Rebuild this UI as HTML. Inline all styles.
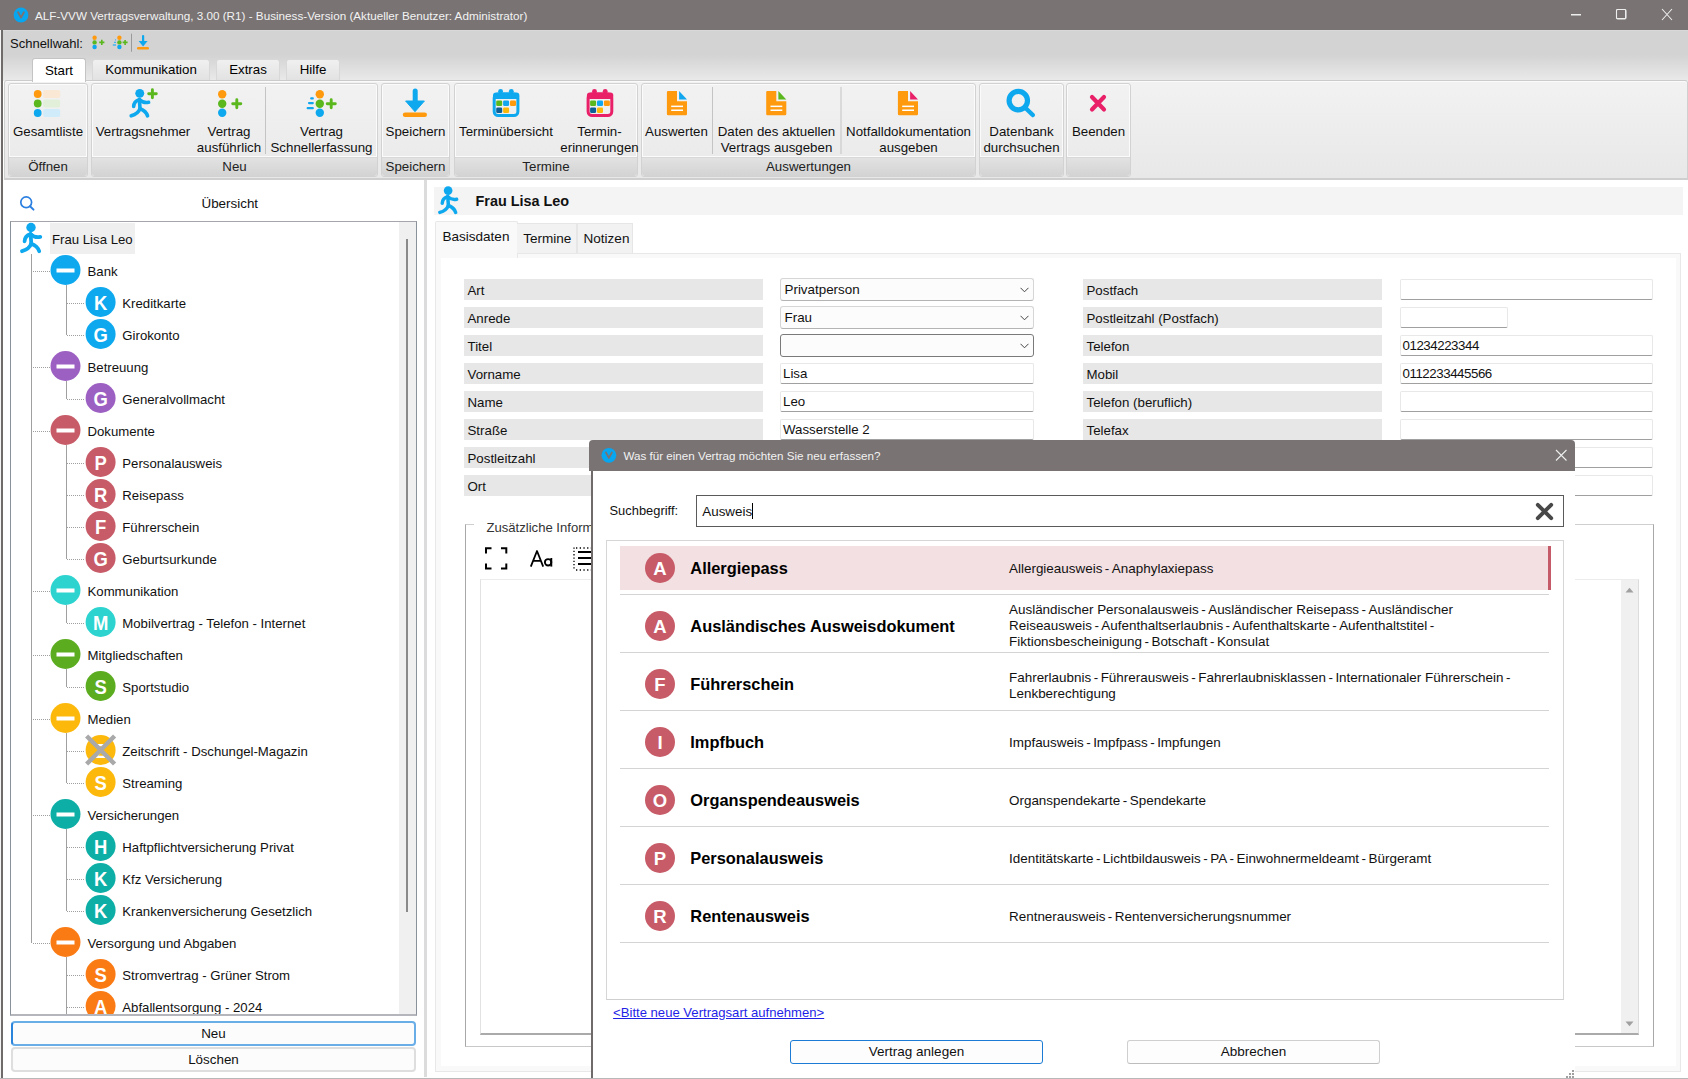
<!DOCTYPE html>
<html><head><meta charset="utf-8">
<style>
*{margin:0;padding:0;box-sizing:border-box}
html,body{width:1688px;height:1079px;overflow:hidden;background:#fff;font-family:"Liberation Sans",sans-serif;color:#000}
.a{position:absolute}
.t{position:absolute;white-space:nowrap;line-height:1}
#title{left:0;top:0;width:1688px;height:30px;background:#797373}
#qat{left:3px;top:30px;width:1685px;height:51px;background:linear-gradient(#d3d3d3 0,#d3d3d3 24px,#ebebeb 51px);border-top:1px solid #d9d9d9}
.tab{position:absolute;top:59px;height:21px;border:1px solid #d8d8d8;border-bottom:none;border-radius:3px 3px 0 0;background:linear-gradient(#f0f0f0,#e2e2e2);font-size:13.3px;text-align:center;line-height:20px}
#ribbon{left:4px;top:79.5px;width:1684px;height:100.5px;background:linear-gradient(#f2f2f2,#e8e8e8);border-top:1px solid #cbcbcb;border-left:1px solid #d0d0d0;border-right:1px solid #d0d0d0;border-bottom:2px solid #cfcfcf;border-radius:3px 3px 0 0;box-shadow:inset 0 1px #fbfbfb}
.grp{position:absolute;top:83px;height:94px;border:1px solid #d2d2d2;border-radius:3px;background:linear-gradient(#f2f2f2,#e9e9e9);box-shadow:inset 0 0 0 1px #fbfbfb}
.grp .lbl{position:absolute;left:0;right:0;bottom:0;height:19px;background:linear-gradient(#e2e2e2,#d3d3d3);border-top:1px solid #d8d8d8;box-shadow:0 -1px #fbfbfb;border-radius:0 0 3px 3px;font-size:13.3px;text-align:center;line-height:17px;color:#222}
.rb{position:absolute;font-size:13.3px;text-align:center;line-height:16px;color:#111}
.sep{position:absolute;width:1px;background:#c8c8c8}
.tt{position:absolute;white-space:nowrap;font-size:13.2px;line-height:19px;color:#111}
.lb{position:absolute;width:299px;height:21.5px;background:#e7e7e7;font-size:13.3px;line-height:23px;padding-left:3.5px;color:#111;white-space:nowrap}
.cb{position:absolute;width:253.5px;height:23.5px;background:#fcfcfc;border:1px solid #d6d6d6;border-bottom-color:#b4b4b4;border-radius:3px;font-size:13.4px;line-height:22px;padding-left:3.5px;color:#111}
.cb.foc{border-color:#7a7a7a}
.in{position:absolute;width:253.5px;height:21.5px;background:#fff;border:1px solid #e8e8e8;border-bottom:1.5px solid #a0a0a0;border-radius:2px;font-size:13.3px;line-height:20px;padding-left:2px;color:#111;white-space:nowrap}
.dd{position:absolute;white-space:nowrap;font-size:13.45px;line-height:16px;color:#111}
</style></head><body>
<div id="title" class="a">
  <div class="a" style="left:14px;top:8px;width:14px;height:14px;border-radius:50%;background:#12a4ee"></div>
  <div class="t" style="left:35px;top:9.8px;font-size:11.7px;color:#f2f2f2">ALF-VVW Vertragsverwaltung, 3.00 (R1) - Business-Version (Aktueller Benutzer: Administrator)</div>
  <div class="a" style="left:1571px;top:14px;width:10px;height:1px;background:#eee"></div>
  <div class="a" style="left:1616px;top:9px;width:10px;height:10px;border:1px solid #eee;border-radius:1px"></div>
</div>
<div id="qat" class="a"></div>
<div class="t" style="left:10px;top:37px;font-size:13px;color:#111">Schnellwahl:</div>
<div class="tab" style="left:32px;width:54px;height:24px;background:#fff;top:58px;line-height:23px;border-color:#c4c4c4;z-index:2">Start</div>
<div class="tab" style="left:92px;width:118px">Kommunikation</div>
<div class="tab" style="left:216px;width:64px">Extras</div>
<div class="tab" style="left:286px;width:54px">Hilfe</div>
<div id="ribbon" class="a"></div>
<div class="grp" style="left:8px;width:80px"><div class="lbl">Öffnen</div></div>
<div class="grp" style="left:91px;width:287px"><div class="lbl">Neu</div></div>
<div class="grp" style="left:381px;width:69px"><div class="lbl">Speichern</div></div>
<div class="grp" style="left:454px;width:184px"><div class="lbl">Termine</div></div>
<div class="grp" style="left:641px;width:335px"><div class="lbl">Auswertungen</div></div>
<div class="grp" style="left:979px;width:85px"><div class="lbl"></div></div>
<div class="grp" style="left:1066px;width:65px"><div class="lbl"></div></div>

<div class="rb" style="left:8px;width:80px;top:124px">Gesamtliste</div>
<div class="rb" style="left:91px;width:104px;top:124px">Vertragsnehmer</div>
<div class="rb" style="left:194px;width:70px;top:124px">Vertrag<br>ausführlich</div>
<div class="rb" style="left:266px;width:111px;top:124px">Vertrag<br>Schnellerfassung</div>
<div class="rb" style="left:381px;width:69px;top:124px">Speichern</div>
<div class="rb" style="left:454px;width:104px;top:124px">Terminübersicht</div>
<div class="rb" style="left:559.5px;width:80px;top:124px">Termin-<br>erinnerungen</div>
<div class="rb" style="left:641px;width:71px;top:124px">Auswerten</div>
<div class="rb" style="left:713px;width:127px;top:124px">Daten des aktuellen<br>Vertrags ausgeben</div>
<div class="rb" style="left:841px;width:135px;top:124px">Notfalldokumentation<br>ausgeben</div>
<div class="rb" style="left:979px;width:85px;top:124px">Datenbank<br>durchsuchen</div>
<div class="rb" style="left:1066px;width:65px;top:124px">Beenden</div>

<svg class="a" style="left:0;top:0" width="1688" height="180" viewBox="0 0 1688 180">
<defs>
 <g id="run">
  <circle cx="11" cy="5" r="4.7" fill="#0ea8ef"/>
  <g fill="none" stroke="#0ea8ef" stroke-width="3.8" stroke-linecap="round" stroke-linejoin="round">
   <path d="M4.6 18.8 Q4.8 13.3 10.6 11.6"/>
   <path d="M10.6 11.6 Q14.8 15.6 20.3 14.4"/>
   <path d="M10.6 11.6 L11.3 21.2"/>
   <path d="M11.3 21.2 Q9.2 26.8 2 28.7"/>
   <path d="M11.3 21.2 Q17.6 23.6 19.2 28.7"/>
  </g>
 </g>
</defs>
<!-- title icon -->
<circle cx="21" cy="15" r="7.4" fill="#07a6f0"/>
<path d="M18.1 12.3 L21 17.6 L23.9 12.3" fill="none" stroke="#797373" stroke-width="1.9" stroke-linecap="round" stroke-linejoin="round"/>
<!-- window controls -->
<rect x="1571" y="14.2" width="10" height="1.3" fill="#eee"/>
<rect x="1616.5" y="9.5" width="9.5" height="9.5" rx="1.2" fill="none" stroke="#eee" stroke-width="1.1"/>
<path d="M1662 9 L1672 20 M1672 9 L1662 20" stroke="#eee" stroke-width="1.1"/>
<!-- QAT icons -->
<circle cx="94.6" cy="37.7" r="2.2" fill="#ff9a0e"/><circle cx="94.6" cy="42.4" r="2.2" fill="#5ab71e"/><circle cx="94.6" cy="47" r="2.2" fill="#0ea8ef"/>
<path d="M99.2 42.4 H104.4 M101.8 39.8 V45" stroke="#5ab71e" stroke-width="1.6"/>
<circle cx="119.4" cy="37.7" r="2.2" fill="#ff9a0e"/><circle cx="119.4" cy="42.4" r="2.2" fill="#5ab71e"/><circle cx="119.4" cy="47" r="2.2" fill="#0ea8ef"/>
<path d="M122.6 42.4 H127.6 M125.1 39.9 V44.9" stroke="#5ab71e" stroke-width="1.6"/>
<path d="M115 39.8 H116 M114 42.4 H116 M112.8 45 H116" stroke="#43b6f0" stroke-width="1.3"/>
<rect x="131" y="33.7" width="1" height="18" fill="#9a9a9a"/>
<path d="M143.1 36 V43" stroke="#0ea8ef" stroke-width="2.2" stroke-linecap="round"/>
<path d="M138.6 41 H147.6 L143.1 46.6 Z" fill="#0ea8ef"/>
<rect x="137" y="47" width="12" height="2.5" rx="1.2" fill="#ff9a0e"/>
<!-- Gesamtliste -->
<rect x="43.2" y="90" width="17" height="8" rx="2" fill="#fae8d5"/>
<rect x="43.2" y="99.5" width="17" height="8" rx="2" fill="#e2f0d9"/>
<rect x="43.2" y="109" width="17" height="8" rx="2" fill="#d0ebfa"/>
<circle cx="37.7" cy="94" r="3.9" fill="#ff9a0e"/><circle cx="37.7" cy="103.5" r="3.9" fill="#5ab71e"/><circle cx="37.7" cy="113" r="3.9" fill="#0ea8ef"/>
<!-- Vertragsnehmer -->
<use href="#run" transform="translate(129.3 88.6) scale(0.95)"/>
<path d="M148.7 93.8 H156.3 M152.4 89.8 V97.7" stroke="#5ab71e" stroke-width="2.9" stroke-linecap="round"/>
<!-- Vertrag ausfuehrlich -->
<circle cx="222.2" cy="94.2" r="4.2" fill="#ff9a0e"/><circle cx="222.2" cy="103.7" r="4.2" fill="#5ab71e"/><circle cx="222.2" cy="112.8" r="4.2" fill="#0ea8ef"/>
<path d="M232.7 103.7 H240.8 M236.8 99.7 V107.8" stroke="#5ab71e" stroke-width="2.9" stroke-linecap="round"/>
<!-- Schnellerfassung -->
<circle cx="319.8" cy="94.2" r="4.2" fill="#ff9a0e"/><circle cx="319.8" cy="103.7" r="4.2" fill="#5ab71e"/><circle cx="319.8" cy="112.8" r="4.2" fill="#0ea8ef"/>
<path d="M327.2 103.7 H335.3 M331.2 99.7 V107.8" stroke="#5ab71e" stroke-width="2.9" stroke-linecap="round"/>
<path d="M311.2 98.4 H312.8 M309 103.1 H312.8 M307.7 108.2 H312.8" stroke="#11a6ee" stroke-width="2.2" stroke-linecap="round"/>
<!-- Speichern -->
<path d="M415.2 91 V104" stroke="#0ea8ef" stroke-width="5" stroke-linecap="round"/>
<path d="M405.6 101 H424.4 L415 111.7 Z" fill="#0ea8ef" stroke="#0ea8ef" stroke-width="1" stroke-linejoin="round"/>
<rect x="402.8" y="112.4" width="24.2" height="4.6" rx="2.3" fill="#ff9a0e"/>
<!-- calendars -->
<g id="cal">
<rect x="494.2" y="94" width="23.7" height="21.5" rx="4" fill="none" stroke="#0ea8ef" stroke-width="3"/>
<rect x="493" y="92.5" width="26.4" height="6.5" rx="3" fill="#0ea8ef"/>
<circle cx="500.6" cy="91.3" r="2.4" fill="#0ea8ef"/><circle cx="511.3" cy="91.3" r="2.4" fill="#0ea8ef"/>
<rect x="496.2" y="100.4" width="6" height="5.6" rx="1.3" fill="#5ab71e"/>
<rect x="503.1" y="100.4" width="6" height="5.6" rx="1.3" fill="#11a6ee"/>
<rect x="510" y="100.4" width="6" height="5.6" rx="1.3" fill="#ff9a0e"/>
<rect x="496.2" y="107.4" width="6" height="5.6" rx="1.3" fill="#0d5f96"/>
<rect x="503.1" y="107.4" width="6" height="5.6" rx="1.3" fill="#fbb80a"/>
</g>
<rect x="588.1" y="94" width="23.7" height="21.5" rx="4" fill="none" stroke="#e91f68" stroke-width="3"/>
<rect x="586.9" y="92.5" width="26.4" height="6.5" rx="3" fill="#e91f68"/>
<circle cx="594.5" cy="91.3" r="2.4" fill="#e91f68"/><circle cx="605.2" cy="91.3" r="2.4" fill="#e91f68"/>
<rect x="590.1" y="100.4" width="6" height="5.6" rx="1.3" fill="#5ab71e"/>
<rect x="597" y="100.4" width="6" height="5.6" rx="1.3" fill="#11a6ee"/>
<rect x="603.9" y="100.4" width="6" height="5.6" rx="1.3" fill="#ff9a0e"/>
<rect x="590.1" y="107.4" width="6" height="5.6" rx="1.3" fill="#0d5f96"/>
<rect x="597" y="107.4" width="6" height="5.6" rx="1.3" fill="#fbb80a"/>
<!-- documents -->
<g id="doc">
<path d="M668 91 H677 V101.3 H687 V114 Q687 115.2 685.8 115.2 H668.1 Q666.9 115.2 666.9 114 V92.2 Q666.9 91 668 91 Z" fill="#ff9a0e"/>
<path d="M679.1 91 L687 99.4 H679.1 Z" fill="#11a6ee"/>
<rect x="671.2" y="105.6" width="11.8" height="1.5" fill="#fff"/>
<rect x="671.2" y="109.5" width="11.8" height="1.5" fill="#fff"/>
</g>
<g transform="translate(99.3 0)">
<path d="M668 91 H677 V101.3 H687 V114 Q687 115.2 685.8 115.2 H668.1 Q666.9 115.2 666.9 114 V92.2 Q666.9 91 668 91 Z" fill="#ff9a0e"/>
<path d="M679.1 91 L687 99.4 H679.1 Z" fill="#5ab71e"/>
<rect x="671.2" y="105.6" width="11.8" height="1.5" fill="#fff"/>
<rect x="671.2" y="109.5" width="11.8" height="1.5" fill="#fff"/>
</g>
<g transform="translate(231 0)">
<path d="M668 91 H677 V101.3 H687 V114 Q687 115.2 685.8 115.2 H668.1 Q666.9 115.2 666.9 114 V92.2 Q666.9 91 668 91 Z" fill="#ff9a0e"/>
<path d="M679.1 91 L687 99.4 H679.1 Z" fill="#e91f68"/>
<rect x="671.2" y="105.6" width="11.8" height="1.5" fill="#fff"/>
<rect x="671.2" y="109.5" width="11.8" height="1.5" fill="#fff"/>
</g>
<!-- magnifier -->
<circle cx="1018.3" cy="100.6" r="9.2" fill="none" stroke="#0ea8ef" stroke-width="5.2"/>
<path d="M1025 107.5 L1032.8 115" stroke="#0ea8ef" stroke-width="4.5" stroke-linecap="round"/>
<!-- X -->
<path d="M1092 97 L1104 109.5 M1104 97 L1092 109.5" stroke="#e91f68" stroke-width="4.2" stroke-linecap="round"/>
<!-- separators -->
<rect x="265" y="87" width="1" height="67" fill="#c4c4c4"/>
<rect x="712" y="87" width="1" height="67" fill="#c4c4c4"/>
<rect x="840.5" y="87" width="1" height="67" fill="#c4c4c4"/>
</svg>

<div class="a" style="left:0;top:30px;width:1px;height:1049px;background:#f4f4f4"></div><div class="a" style="left:1px;top:30px;width:2px;height:1049px;background:#6f6b6b;z-index:3"></div>
<div class="a" style="left:0;top:1078px;width:1688px;height:1px;background:#b8b8b8;z-index:4"></div>
<div class="a" style="left:3px;top:180px;width:421px;height:897px;background:#fff"></div>
<div class="a" style="left:424px;top:180px;width:3px;height:897px;background:#dcdcdc"></div>
<svg class="a" style="left:0;top:180px" width="40" height="40" viewBox="0 180 40 40">
<circle cx="26.2" cy="202.3" r="5.4" fill="none" stroke="#2b7fe0" stroke-width="1.7"/>
<path d="M30 206.2 L33.5 209.6" stroke="#2b7fe0" stroke-width="2" stroke-linecap="round"/>
</svg>
<div class="t" style="left:201.5px;top:197px;font-size:13.4px;color:#111">Übersicht</div>
<div class="a" style="left:10px;top:221px;width:407px;height:795px;border:1px solid #8b919a;border-top:1.5px solid #a4a6ab;border-bottom:2px solid #b4b6bc;overflow:hidden">
 <div class="a" style="left:388px;top:0;width:17px;height:795px;background:#f0f0f0"></div>
 <div class="a" style="left:395px;top:17px;width:2px;height:673px;background:#8a8a8a"></div>
</div>
<div class="a" style="left:10px;top:222px;width:388px;height:792px;overflow:hidden">
<svg class="a" style="left:-10px;top:-222px" width="400" height="1014" viewBox="0 0 400 1014">
<rect x="31" y="254" width="1" height="689" fill="#a0a0a0"/>
<line x1="33" y1="271.5" x2="50" y2="271.5" stroke="#a0a0a0" stroke-width="1" stroke-dasharray="1 1"/>
<rect fill="#a0a0a0" x="66" y="285" width="1" height="50"/>
<line x1="67" y1="303.5" x2="85" y2="303.5" stroke="#a0a0a0" stroke-width="1" stroke-dasharray="1 1"/>
<line x1="67" y1="335.5" x2="85" y2="335.5" stroke="#a0a0a0" stroke-width="1" stroke-dasharray="1 1"/>
<line x1="33" y1="367.5" x2="50" y2="367.5" stroke="#a0a0a0" stroke-width="1" stroke-dasharray="1 1"/>
<rect fill="#a0a0a0" x="66" y="381" width="1" height="18"/>
<line x1="67" y1="399.5" x2="85" y2="399.5" stroke="#a0a0a0" stroke-width="1" stroke-dasharray="1 1"/>
<line x1="33" y1="431.5" x2="50" y2="431.5" stroke="#a0a0a0" stroke-width="1" stroke-dasharray="1 1"/>
<rect fill="#a0a0a0" x="66" y="445" width="1" height="114"/>
<line x1="67" y1="463.5" x2="85" y2="463.5" stroke="#a0a0a0" stroke-width="1" stroke-dasharray="1 1"/>
<line x1="67" y1="495.5" x2="85" y2="495.5" stroke="#a0a0a0" stroke-width="1" stroke-dasharray="1 1"/>
<line x1="67" y1="527.5" x2="85" y2="527.5" stroke="#a0a0a0" stroke-width="1" stroke-dasharray="1 1"/>
<line x1="67" y1="559.5" x2="85" y2="559.5" stroke="#a0a0a0" stroke-width="1" stroke-dasharray="1 1"/>
<line x1="33" y1="591.5" x2="50" y2="591.5" stroke="#a0a0a0" stroke-width="1" stroke-dasharray="1 1"/>
<rect fill="#a0a0a0" x="66" y="605" width="1" height="18"/>
<line x1="67" y1="623.5" x2="85" y2="623.5" stroke="#a0a0a0" stroke-width="1" stroke-dasharray="1 1"/>
<line x1="33" y1="655.5" x2="50" y2="655.5" stroke="#a0a0a0" stroke-width="1" stroke-dasharray="1 1"/>
<rect fill="#a0a0a0" x="66" y="669" width="1" height="18"/>
<line x1="67" y1="687.5" x2="85" y2="687.5" stroke="#a0a0a0" stroke-width="1" stroke-dasharray="1 1"/>
<line x1="33" y1="719.5" x2="50" y2="719.5" stroke="#a0a0a0" stroke-width="1" stroke-dasharray="1 1"/>
<rect fill="#a0a0a0" x="66" y="733" width="1" height="50"/>
<line x1="67" y1="751.5" x2="85" y2="751.5" stroke="#a0a0a0" stroke-width="1" stroke-dasharray="1 1"/>
<line x1="67" y1="783.5" x2="85" y2="783.5" stroke="#a0a0a0" stroke-width="1" stroke-dasharray="1 1"/>
<line x1="33" y1="815.5" x2="50" y2="815.5" stroke="#a0a0a0" stroke-width="1" stroke-dasharray="1 1"/>
<rect fill="#a0a0a0" x="66" y="829" width="1" height="82"/>
<line x1="67" y1="847.5" x2="85" y2="847.5" stroke="#a0a0a0" stroke-width="1" stroke-dasharray="1 1"/>
<line x1="67" y1="879.5" x2="85" y2="879.5" stroke="#a0a0a0" stroke-width="1" stroke-dasharray="1 1"/>
<line x1="67" y1="911.5" x2="85" y2="911.5" stroke="#a0a0a0" stroke-width="1" stroke-dasharray="1 1"/>
<line x1="33" y1="943.5" x2="50" y2="943.5" stroke="#a0a0a0" stroke-width="1" stroke-dasharray="1 1"/>
<rect fill="#a0a0a0" x="66" y="957" width="1" height="58"/>
<line x1="67" y1="975.5" x2="85" y2="975.5" stroke="#a0a0a0" stroke-width="1" stroke-dasharray="1 1"/>
<line x1="67" y1="1007.5" x2="85" y2="1007.5" stroke="#a0a0a0" stroke-width="1" stroke-dasharray="1 1"/>
<rect x="50" y="223" width="85" height="31" fill="#efefef"/>
<use href="#run" transform="translate(20 222.5) scale(1.0)"/>
<circle cx="65.5" cy="270.0" r="15" fill="#0da8ee"/>
<rect x="56.5" y="268.5" width="18" height="4" fill="#fff"/>
<circle cx="100.6" cy="302.0" r="15" fill="#0da8ee"/>
<text transform="translate(100.6 309.6) scale(0.9 1)" font-family="Liberation Sans" font-weight="bold" font-size="20.5" fill="#fff" text-anchor="middle">K</text>
<circle cx="100.6" cy="334.0" r="15" fill="#0da8ee"/>
<text transform="translate(100.6 341.6) scale(0.9 1)" font-family="Liberation Sans" font-weight="bold" font-size="20.5" fill="#fff" text-anchor="middle">G</text>
<circle cx="65.5" cy="366.0" r="15" fill="#9c5fc2"/>
<rect x="56.5" y="364.5" width="18" height="4" fill="#fff"/>
<circle cx="100.6" cy="398.0" r="15" fill="#9c5fc2"/>
<text transform="translate(100.6 405.6) scale(0.9 1)" font-family="Liberation Sans" font-weight="bold" font-size="20.5" fill="#fff" text-anchor="middle">G</text>
<circle cx="65.5" cy="430.0" r="15" fill="#c75b67"/>
<rect x="56.5" y="428.5" width="18" height="4" fill="#fff"/>
<circle cx="100.6" cy="462.0" r="15" fill="#c75b67"/>
<text transform="translate(100.6 469.6) scale(0.9 1)" font-family="Liberation Sans" font-weight="bold" font-size="20.5" fill="#fff" text-anchor="middle">P</text>
<circle cx="100.6" cy="494.0" r="15" fill="#c75b67"/>
<text transform="translate(100.6 501.6) scale(0.9 1)" font-family="Liberation Sans" font-weight="bold" font-size="20.5" fill="#fff" text-anchor="middle">R</text>
<circle cx="100.6" cy="526.0" r="15" fill="#c75b67"/>
<text transform="translate(100.6 533.6) scale(0.9 1)" font-family="Liberation Sans" font-weight="bold" font-size="20.5" fill="#fff" text-anchor="middle">F</text>
<circle cx="100.6" cy="558.0" r="15" fill="#c75b67"/>
<text transform="translate(100.6 565.6) scale(0.9 1)" font-family="Liberation Sans" font-weight="bold" font-size="20.5" fill="#fff" text-anchor="middle">G</text>
<circle cx="65.5" cy="590.0" r="15" fill="#2cd3cf"/>
<rect x="56.5" y="588.5" width="18" height="4" fill="#fff"/>
<circle cx="100.6" cy="622.0" r="15" fill="#2cd3cf"/>
<text transform="translate(100.6 629.6) scale(0.9 1)" font-family="Liberation Sans" font-weight="bold" font-size="20.5" fill="#fff" text-anchor="middle">M</text>
<circle cx="65.5" cy="654.0" r="15" fill="#5cac20"/>
<rect x="56.5" y="652.5" width="18" height="4" fill="#fff"/>
<circle cx="100.6" cy="686.0" r="15" fill="#5cac20"/>
<text transform="translate(100.6 693.6) scale(0.9 1)" font-family="Liberation Sans" font-weight="bold" font-size="20.5" fill="#fff" text-anchor="middle">S</text>
<circle cx="65.5" cy="718.0" r="15" fill="#fdb90b"/>
<rect x="56.5" y="716.5" width="18" height="4" fill="#fff"/>
<circle cx="100.6" cy="750.0" r="15" fill="#fdb90b"/>
<text transform="translate(100.6 757.6) scale(0.9 1)" font-family="Liberation Sans" font-weight="bold" font-size="20.5" fill="#fff" text-anchor="middle">Z</text>
<path d="M86.6 736.0 L114.6 764.0 M114.6 736.0 L86.6 764.0" stroke="#a9a9a9" stroke-width="4.5"/>
<circle cx="100.6" cy="782.0" r="15" fill="#fdb90b"/>
<text transform="translate(100.6 789.6) scale(0.9 1)" font-family="Liberation Sans" font-weight="bold" font-size="20.5" fill="#fff" text-anchor="middle">S</text>
<circle cx="65.5" cy="814.0" r="15" fill="#0daea5"/>
<rect x="56.5" y="812.5" width="18" height="4" fill="#fff"/>
<circle cx="100.6" cy="846.0" r="15" fill="#0daea5"/>
<text transform="translate(100.6 853.6) scale(0.9 1)" font-family="Liberation Sans" font-weight="bold" font-size="20.5" fill="#fff" text-anchor="middle">H</text>
<circle cx="100.6" cy="878.0" r="15" fill="#0daea5"/>
<text transform="translate(100.6 885.6) scale(0.9 1)" font-family="Liberation Sans" font-weight="bold" font-size="20.5" fill="#fff" text-anchor="middle">K</text>
<circle cx="100.6" cy="910.0" r="15" fill="#0daea5"/>
<text transform="translate(100.6 917.6) scale(0.9 1)" font-family="Liberation Sans" font-weight="bold" font-size="20.5" fill="#fff" text-anchor="middle">K</text>
<circle cx="65.5" cy="942.0" r="15" fill="#fa7b14"/>
<rect x="56.5" y="940.5" width="18" height="4" fill="#fff"/>
<circle cx="100.6" cy="974.0" r="15" fill="#fa7b14"/>
<text transform="translate(100.6 981.6) scale(0.9 1)" font-family="Liberation Sans" font-weight="bold" font-size="20.5" fill="#fff" text-anchor="middle">S</text>
<circle cx="100.6" cy="1006.0" r="15" fill="#fa7b14"/>
<text transform="translate(100.6 1013.6) scale(0.9 1)" font-family="Liberation Sans" font-weight="bold" font-size="20.5" fill="#fff" text-anchor="middle">A</text>
</svg>
<div class="tt" style="margin-left:-10px;left:52px;margin-top:-222px;top:230px">Frau Lisa Leo</div>
<div class="tt" style="margin-left:-10px;left:87.5px;margin-top:-222px;top:262px">Bank</div>
<div class="tt" style="margin-left:-10px;left:122.3px;margin-top:-222px;top:294px">Kreditkarte</div>
<div class="tt" style="margin-left:-10px;left:122.3px;margin-top:-222px;top:326px">Girokonto</div>
<div class="tt" style="margin-left:-10px;left:87.5px;margin-top:-222px;top:358px">Betreuung</div>
<div class="tt" style="margin-left:-10px;left:122.3px;margin-top:-222px;top:390px">Generalvollmacht</div>
<div class="tt" style="margin-left:-10px;left:87.5px;margin-top:-222px;top:422px">Dokumente</div>
<div class="tt" style="margin-left:-10px;left:122.3px;margin-top:-222px;top:454px">Personalausweis</div>
<div class="tt" style="margin-left:-10px;left:122.3px;margin-top:-222px;top:486px">Reisepass</div>
<div class="tt" style="margin-left:-10px;left:122.3px;margin-top:-222px;top:518px">Führerschein</div>
<div class="tt" style="margin-left:-10px;left:122.3px;margin-top:-222px;top:550px">Geburtsurkunde</div>
<div class="tt" style="margin-left:-10px;left:87.5px;margin-top:-222px;top:582px">Kommunikation</div>
<div class="tt" style="margin-left:-10px;left:122.3px;margin-top:-222px;top:614px">Mobilvertrag - Telefon - Internet</div>
<div class="tt" style="margin-left:-10px;left:87.5px;margin-top:-222px;top:646px">Mitgliedschaften</div>
<div class="tt" style="margin-left:-10px;left:122.3px;margin-top:-222px;top:678px">Sportstudio</div>
<div class="tt" style="margin-left:-10px;left:87.5px;margin-top:-222px;top:710px">Medien</div>
<div class="tt" style="margin-left:-10px;left:122.3px;margin-top:-222px;top:742px">Zeitschrift - Dschungel-Magazin</div>
<div class="tt" style="margin-left:-10px;left:122.3px;margin-top:-222px;top:774px">Streaming</div>
<div class="tt" style="margin-left:-10px;left:87.5px;margin-top:-222px;top:806px">Versicherungen</div>
<div class="tt" style="margin-left:-10px;left:122.3px;margin-top:-222px;top:838px">Haftpflichtversicherung Privat</div>
<div class="tt" style="margin-left:-10px;left:122.3px;margin-top:-222px;top:870px">Kfz Versicherung</div>
<div class="tt" style="margin-left:-10px;left:122.3px;margin-top:-222px;top:902px">Krankenversicherung Gesetzlich</div>
<div class="tt" style="margin-left:-10px;left:87.5px;margin-top:-222px;top:934px">Versorgung und Abgaben</div>
<div class="tt" style="margin-left:-10px;left:122.3px;margin-top:-222px;top:966px">Stromvertrag - Grüner Strom</div>
<div class="tt" style="margin-left:-10px;left:122.3px;margin-top:-222px;top:998px">Abfallentsorgung - 2024</div>
</div>
<div class="a" style="left:11px;top:1021px;width:405px;height:25px;border:2px solid #6aaee8;border-left-color:#2a84dc;border-radius:4px;background:#fcfcfc;font-size:13.4px;text-align:center;line-height:21px;color:#111">Neu</div>
<div class="a" style="left:11px;top:1047px;width:405px;height:25px;border:2px solid #dedede;border-radius:4px;background:#fcfcfc;font-size:13.4px;text-align:center;line-height:21px;color:#111">Löschen</div>

<div class="a" style="left:434px;top:186.5px;width:1249px;height:28px;background:#f4f4f4"></div>
<svg class="a" style="left:438px;top:186px" width="22" height="30" viewBox="0 0 22 30"><use href="#run" transform="scale(0.92)"/></svg>
<div class="t" style="left:475.5px;top:194px;font-size:14.4px;font-weight:bold;color:#111">Frau Lisa Leo</div>
<!-- tab page -->
<div class="a" style="left:434.5px;top:252.5px;width:1246px;height:819.5px;background:#f9f9f9;border:1px solid #e8e8e8"></div>
<div class="a" style="left:441px;top:257.5px;width:1235px;height:808px;background:#fff"></div>
<div class="a" style="left:434.5px;top:221px;width:83px;height:37px;background:#f9f9f9;border:1px solid #e8e8e8;border-bottom:none;border-radius:2px 2px 0 0"></div>
<div class="t" style="left:442.4px;top:230px;font-size:13.55px;color:#111">Basisdaten</div>
<div class="a" style="left:517.3px;top:223px;width:60px;height:30px;background:#f2f2f2;border:1px solid #e6e6e6;border-left:none;border-bottom:none"></div>
<div class="t" style="left:523.2px;top:232px;font-size:13.55px;color:#111">Termine</div>
<div class="a" style="left:577.3px;top:223px;width:55.5px;height:30px;background:#f2f2f2;border:1px solid #e6e6e6;border-bottom:none"></div>
<div class="t" style="left:583.5px;top:232px;font-size:13.55px;color:#111">Notizen</div>
<div class="lb" style="left:464px;top:278.5px">Art</div>
<div class="lb" style="left:1083px;top:278.5px">Postfach</div>
<div class="cb" style="left:780px;top:277.5px">Privatperson<svg class="a" style="right:4px;top:8px" width="9" height="6" viewBox="0 0 9 6"><path d="M0.5 0.8 L4.5 4.8 L8.5 0.8" fill="none" stroke="#444" stroke-width="1"/></svg></div>
<div class="in" style="left:1399.5px;top:278.5px;width:253px"></div>
<div class="lb" style="left:464px;top:306.5px">Anrede</div>
<div class="lb" style="left:1083px;top:306.5px">Postleitzahl (Postfach)</div>
<div class="cb" style="left:780px;top:305.5px">Frau<svg class="a" style="right:4px;top:8px" width="9" height="6" viewBox="0 0 9 6"><path d="M0.5 0.8 L4.5 4.8 L8.5 0.8" fill="none" stroke="#444" stroke-width="1"/></svg></div>
<div class="in" style="left:1399.5px;top:306.5px;width:108px"></div>
<div class="lb" style="left:464px;top:334.5px">Titel</div>
<div class="lb" style="left:1083px;top:334.5px">Telefon</div>
<div class="cb foc" style="left:780px;top:333.5px"><svg class="a" style="right:4px;top:8px" width="9" height="6" viewBox="0 0 9 6"><path d="M0.5 0.8 L4.5 4.8 L8.5 0.8" fill="none" stroke="#444" stroke-width="1"/></svg></div>
<div class="in" style="left:1399.5px;top:334.5px;width:253px;letter-spacing:-0.45px">01234223344</div>
<div class="lb" style="left:464px;top:362.5px">Vorname</div>
<div class="lb" style="left:1083px;top:362.5px">Mobil</div>
<div class="in" style="left:780px;top:362.5px">Lisa</div>
<div class="in" style="left:1399.5px;top:362.5px;width:253px;letter-spacing:-0.45px">0112233445566</div>
<div class="lb" style="left:464px;top:390.5px">Name</div>
<div class="lb" style="left:1083px;top:390.5px">Telefon (beruflich)</div>
<div class="in" style="left:780px;top:390.5px">Leo</div>
<div class="in" style="left:1399.5px;top:390.5px;width:253px"></div>
<div class="lb" style="left:464px;top:418.5px">Straße</div>
<div class="lb" style="left:1083px;top:418.5px">Telefax</div>
<div class="in" style="left:780px;top:418.5px">Wasserstelle 2</div>
<div class="in" style="left:1399.5px;top:418.5px;width:253px"></div>
<div class="lb" style="left:464px;top:446.5px">Postleitzahl</div>
<div class="in" style="left:780px;top:446.5px"></div>
<div class="in" style="left:1399.5px;top:446.5px;width:253px"></div>
<div class="lb" style="left:464px;top:474.5px">Ort</div>
<div class="in" style="left:780px;top:474.5px"></div>
<div class="in" style="left:1399.5px;top:474.5px;width:253px"></div>
<!-- group box -->
<div class="a" style="left:464.5px;top:524px;width:1189px;height:522.5px;border-left:1px solid #a8a8a8;border-top:1px solid #cfcfcf;border-right:1px solid #a8a8a8;border-bottom:1.5px solid #c8c8c8"></div>
<div class="a" style="left:474px;top:520px;width:120px;height:10px;background:#fff"></div>
<div class="t" style="left:486.5px;top:520.5px;font-size:13.1px;color:#333">Zusätzliche Informationen</div>
<svg class="a" style="left:480px;top:540px" width="120" height="40" viewBox="480 540 120 40">
<path d="M486 553.5 V548.3 H491.5 M501 548.3 H506.3 V553.5 M486 563.5 V568.6 H491.5 M501 568.6 H506.3 V563.5" fill="none" stroke="#000" stroke-width="2"/>
<path d="M530.8 566.6 L537 551 L543.2 566.6 M533.2 560.8 H540.8" fill="none" stroke="#000" stroke-width="1.8" stroke-linejoin="round"/>
<circle cx="548.1" cy="562.3" r="3.2" fill="none" stroke="#000" stroke-width="1.9"/>
<path d="M551.3 558 V566.6" stroke="#000" stroke-width="1.9"/>
<path d="M574 547.5 V570" stroke="#000" stroke-width="1.3" stroke-dasharray="1.3 2"/>
<path d="M576 548 H592 M576 570 H592" stroke="#000" stroke-width="1.3" stroke-dasharray="1.3 2.4"/>
<path d="M578 552 H592 M578 558 H592 M578 564 H592" stroke="#000" stroke-width="2"/>
</svg>
<div class="a" style="left:479.5px;top:578.5px;width:1159px;height:456px;border-left:1px solid #e2e2e2;border-top:1px solid #ececec;border-bottom:2px solid #aaaaaa;border-right:1px solid #dcdcdc"></div>
<div class="a" style="left:1621px;top:580px;width:17px;height:453px;background:#f0f0f0"></div>
<svg class="a" style="left:1621px;top:580px" width="17" height="453" viewBox="0 0 17 453">
<path d="M4.5 12.5 L8.5 7.8 L12.5 12.5 Z" fill="#a0a0a0"/>
<path d="M4.5 441.5 L8.5 446.2 L12.5 441.5 Z" fill="#a0a0a0"/>
</svg>

<div class="a" style="left:589px;top:440px;width:986px;height:31px;background:#797373;border-radius:4px 4px 0 0"></div>
<div class="a" style="left:591px;top:471px;width:984px;height:608px;background:#fff;border-left:2px solid #6f6b6b"></div>
<svg class="a" style="left:590px;top:440px" width="986" height="40" viewBox="590 440 986 40">
<circle cx="608.9" cy="455.3" r="7.4" fill="#07a6f0"/>
<path d="M606 452.6 L608.9 457.9 L611.8 452.6" fill="none" stroke="#797373" stroke-width="1.9" stroke-linecap="round" stroke-linejoin="round"/>
<path d="M1556 450 L1566.5 460.5 M1566.5 450 L1556 460.5" stroke="#eee" stroke-width="1.1"/>
</svg>
<div class="t" style="left:623.4px;top:450px;font-size:11.65px;color:#f2f2f2">Was für einen Vertrag möchten Sie neu erfassen?</div>
<div class="t" style="left:609.5px;top:505px;font-size:12.9px;color:#111">Suchbegriff:</div>
<div class="a" style="left:696px;top:495px;width:868px;height:32px;border:1px solid #5a5a5a;background:#fff"></div>
<div class="t" style="left:702.3px;top:505px;font-size:13.4px;color:#111">Ausweis</div>
<div class="a" style="left:752px;top:503px;width:1px;height:16px;background:#000"></div>
<svg class="a" style="left:1530px;top:498px" width="30" height="28" viewBox="1530 498 30 28">
<path d="M1537.8 504.8 L1551.2 518.2 M1551.2 504.8 L1537.8 518.2" stroke="#484848" stroke-width="3.9" stroke-linecap="round"/>
</svg>
<div class="a" style="left:606px;top:539.5px;width:958px;height:460.5px;border:1px solid #d6d6d6;border-bottom:1.5px solid #cfcfcf;background:#fff"></div>
<div class="a" style="left:620px;top:546px;width:931px;height:44px;background:#f3e0e2"></div>
<div class="a" style="left:1548px;top:546px;width:3px;height:44px;background:#c55a68"></div>
<div class="a" style="left:620px;top:594px;width:929px;height:1px;background:#d4d4d4"></div>
<div class="t" style="left:690.3px;top:557.5px;font-size:16.4px;font-weight:bold;color:#000;line-height:20px">Allergiepass</div>
<div class="dd" style="left:1009px;top:561.0px">Allergieausweis<span style="word-spacing:-1.25px"> - </span>Anaphylaxiepass</div>
<div class="a" style="left:620px;top:652px;width:929px;height:1px;background:#d4d4d4"></div>
<div class="t" style="left:690.3px;top:615.5px;font-size:16.4px;font-weight:bold;color:#000;line-height:20px">Ausländisches Ausweisdokument</div>
<div class="dd" style="left:1009px;top:602.0px">Ausländischer Personalausweis<span style="word-spacing:-1.25px"> - </span>Ausländischer Reisepass<span style="word-spacing:-1.25px"> - </span>Ausländischer<br>Reiseausweis<span style="word-spacing:-1.25px"> - </span>Aufenthaltserlaubnis<span style="word-spacing:-1.25px"> - </span>Aufenthaltskarte<span style="word-spacing:-1.25px"> - </span>Aufenthaltstitel<span style="word-spacing:-1.25px"> -</span><br>Fiktionsbescheinigung<span style="word-spacing:-1.25px"> - </span>Botschaft<span style="word-spacing:-1.25px"> - </span>Konsulat</div>
<div class="a" style="left:620px;top:710px;width:929px;height:1px;background:#d4d4d4"></div>
<div class="t" style="left:690.3px;top:673.5px;font-size:16.4px;font-weight:bold;color:#000;line-height:20px">Führerschein</div>
<div class="dd" style="left:1009px;top:670.0px">Fahrerlaubnis<span style="word-spacing:-1.25px"> - </span>Führerausweis<span style="word-spacing:-1.25px"> - </span>Fahrerlaubnisklassen<span style="word-spacing:-1.25px"> - </span>Internationaler Führerschein<span style="word-spacing:-1.25px"> -</span><br>Lenkberechtigung</div>
<div class="a" style="left:620px;top:768px;width:929px;height:1px;background:#d4d4d4"></div>
<div class="t" style="left:690.3px;top:731.5px;font-size:16.4px;font-weight:bold;color:#000;line-height:20px">Impfbuch</div>
<div class="dd" style="left:1009px;top:735.0px">Impfausweis<span style="word-spacing:-1.25px"> - </span>Impfpass<span style="word-spacing:-1.25px"> - </span>Impfungen</div>
<div class="a" style="left:620px;top:826px;width:929px;height:1px;background:#d4d4d4"></div>
<div class="t" style="left:690.3px;top:789.5px;font-size:16.4px;font-weight:bold;color:#000;line-height:20px">Organspendeausweis</div>
<div class="dd" style="left:1009px;top:793.0px">Organspendekarte<span style="word-spacing:-1.25px"> - </span>Spendekarte</div>
<div class="a" style="left:620px;top:884px;width:929px;height:1px;background:#d4d4d4"></div>
<div class="t" style="left:690.3px;top:847.5px;font-size:16.4px;font-weight:bold;color:#000;line-height:20px">Personalausweis</div>
<div class="dd" style="left:1009px;top:851.0px">Identitätskarte<span style="word-spacing:-1.25px"> - </span>Lichtbildausweis<span style="word-spacing:-1.25px"> - </span>PA<span style="word-spacing:-1.25px"> - </span>Einwohnermeldeamt<span style="word-spacing:-1.25px"> - </span>Bürgeramt</div>
<div class="a" style="left:620px;top:942px;width:929px;height:1px;background:#d4d4d4"></div>
<div class="t" style="left:690.3px;top:905.5px;font-size:16.4px;font-weight:bold;color:#000;line-height:20px">Rentenausweis</div>
<div class="dd" style="left:1009px;top:909.0px">Rentnerausweis<span style="word-spacing:-1.25px"> - </span>Rentenversicherungsnummer</div>
<svg class="a" style="left:640px;top:540px" width="40" height="400" viewBox="640 540 40 400">
<circle cx="660" cy="568" r="15" fill="#c75b67"/>
<text x="660" y="574.7" font-family="Liberation Sans" font-weight="bold" font-size="18.5" fill="#fff" text-anchor="middle">A</text>
<circle cx="660" cy="626" r="15" fill="#c75b67"/>
<text x="660" y="632.7" font-family="Liberation Sans" font-weight="bold" font-size="18.5" fill="#fff" text-anchor="middle">A</text>
<circle cx="660" cy="684" r="15" fill="#c75b67"/>
<text x="660" y="690.7" font-family="Liberation Sans" font-weight="bold" font-size="18.5" fill="#fff" text-anchor="middle">F</text>
<circle cx="660" cy="742" r="15" fill="#c75b67"/>
<text x="660" y="748.7" font-family="Liberation Sans" font-weight="bold" font-size="18.5" fill="#fff" text-anchor="middle">I</text>
<circle cx="660" cy="800" r="15" fill="#c75b67"/>
<text x="660" y="806.7" font-family="Liberation Sans" font-weight="bold" font-size="18.5" fill="#fff" text-anchor="middle">O</text>
<circle cx="660" cy="858" r="15" fill="#c75b67"/>
<text x="660" y="864.7" font-family="Liberation Sans" font-weight="bold" font-size="18.5" fill="#fff" text-anchor="middle">P</text>
<circle cx="660" cy="916" r="15" fill="#c75b67"/>
<text x="660" y="922.7" font-family="Liberation Sans" font-weight="bold" font-size="18.5" fill="#fff" text-anchor="middle">R</text>
</svg>
<div class="t" style="left:613.1px;top:1005.5px;font-size:13.1px;color:#1f1fe6;text-decoration:underline">&lt;Bitte neue Vertragsart aufnehmen&gt;</div>
<div class="a" style="left:790px;top:1040px;width:253px;height:24px;border:1.5px solid #1c7bd4;border-radius:3px;background:#fdfdfd;font-size:13.5px;text-align:center;line-height:21px;color:#111">Vertrag anlegen</div>
<div class="a" style="left:1127px;top:1040px;width:253px;height:24px;border:1px solid #cfcfcf;border-bottom-color:#bdbdbd;border-radius:3px;background:#fdfdfd;font-size:13.5px;text-align:center;line-height:22px;color:#111">Abbrechen</div>
<svg class="a" style="left:1564px;top:1068px" width="12" height="11" viewBox="0 0 12 11">
<rect x="8" y="2" width="2" height="2" fill="#a0a0a0"/><rect x="5" y="5" width="2" height="2" fill="#a0a0a0"/><rect x="8" y="5" width="2" height="2" fill="#a0a0a0"/>
<rect x="2" y="8" width="2" height="2" fill="#a0a0a0"/><rect x="5" y="8" width="2" height="2" fill="#a0a0a0"/><rect x="8" y="8" width="2" height="2" fill="#a0a0a0"/>
</svg>
</body></html>
